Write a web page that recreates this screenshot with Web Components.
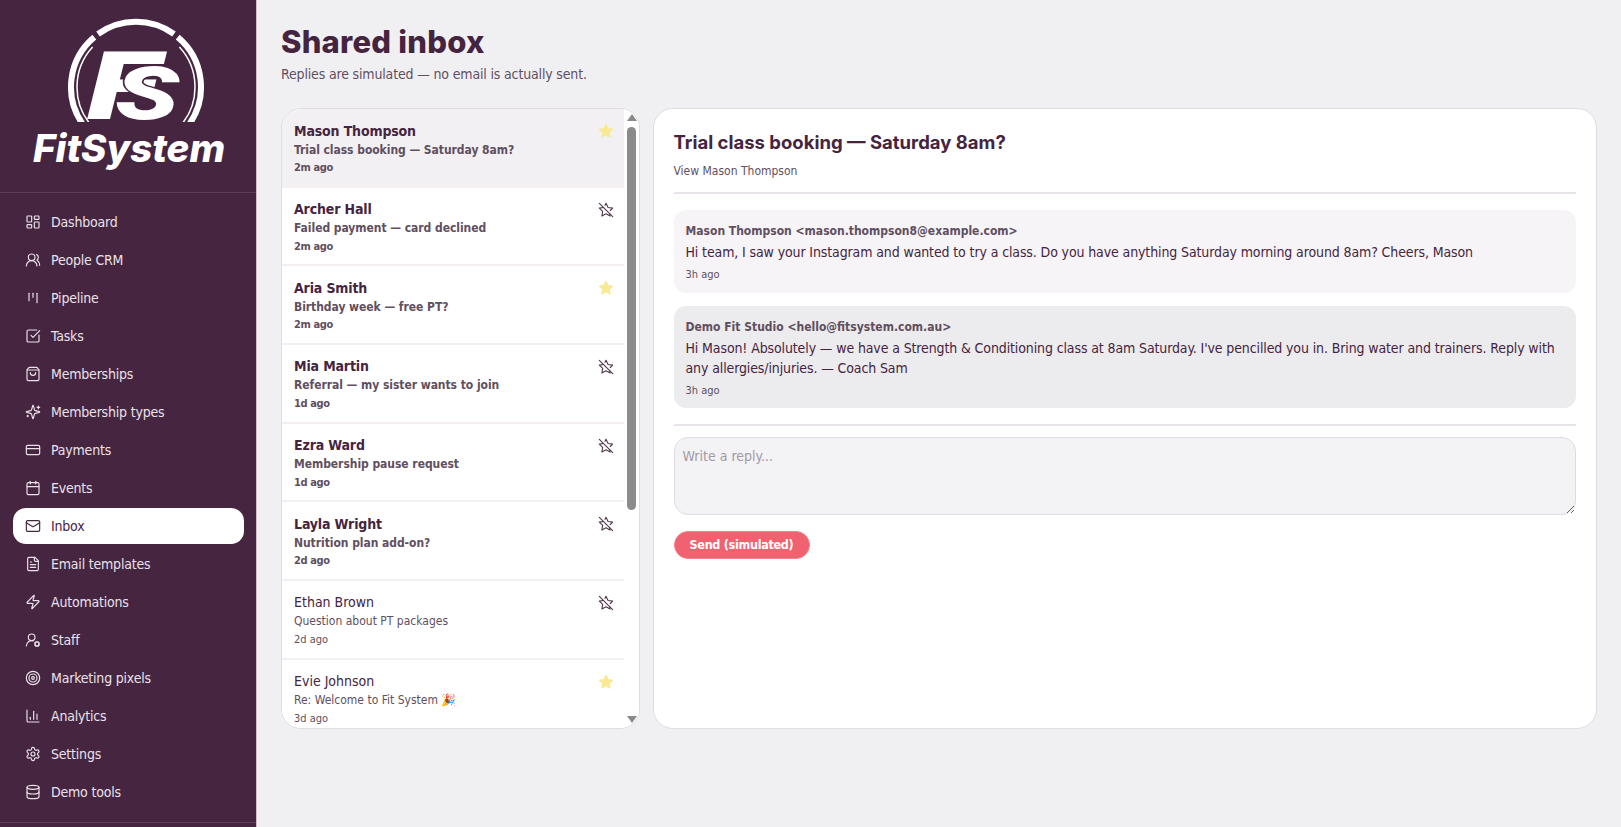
<!DOCTYPE html>
<html><head><meta charset="utf-8">
<style>
html,body{margin:0;height:100%;overflow:hidden;background:#f0f0f3}
</style></head><body>
<fit-app></fit-app>
<script>
const P={
dashboard:'<rect x="3" y="3" width="7" height="9" rx="1"/><rect x="14" y="3" width="7" height="5" rx="1"/><rect x="14" y="12" width="7" height="9" rx="1"/><rect x="3" y="16" width="7" height="5" rx="1"/>',
people:'<path d="M18 21a8 8 0 0 0-16 0"/><circle cx="10" cy="8" r="5"/><path d="M22 20c0-3.37-2-6.5-4-8a5 5 0 0 0-.45-8.3"/>',
pipeline:'<path d="M6 5v11"/><path d="M12 5v6"/><path d="M18 5v14"/>',
tasks:'<path d="M21 10.5V19a2 2 0 0 1-2 2H5a2 2 0 0 1-2-2V5a2 2 0 0 1 2-2h12.5"/><path d="m9 11 3 3L22 4"/>',
bag:'<path d="M16 10a4 4 0 0 1-8 0"/><path d="M3.103 6.034h17.794"/><path d="M3.4 5.467a2 2 0 0 0-.4 1.2V20a2 2 0 0 0 2 2h14a2 2 0 0 0 2-2V6.667a2 2 0 0 0-.4-1.2l-2-2.667A2 2 0 0 0 17 2H7a2 2 0 0 0-1.6.8z"/>',
sparkles:'<path d="M9.937 15.5A2 2 0 0 0 8.5 14.063l-6.135-1.582a.5.5 0 0 1 0-.962L8.5 9.936A2 2 0 0 0 9.937 8.5l1.582-6.135a.5.5 0 0 1 .963 0L14.063 8.5A2 2 0 0 0 15.5 9.937l6.135 1.581a.5.5 0 0 1 0 .964L15.5 14.063a2 2 0 0 0-1.437 1.437l-1.582 6.135a.5.5 0 0 1-.963 0z"/><path d="M20 3v4"/><path d="M22 5h-4"/><path d="M4 17v2"/><path d="M5 18H3"/>',
card:'<rect x="2" y="5" width="20" height="14" rx="2"/><line x1="2" y1="10" x2="22" y2="10"/>',
calendar:'<path d="M8 2v4"/><path d="M16 2v4"/><rect x="3" y="4" width="18" height="18" rx="2"/><path d="M3 10h18"/>',
mail:'<rect x="2" y="4" width="20" height="16" rx="2"/><path d="m22 7-8.97 5.7a1.94 1.94 0 0 1-2.06 0L2 7"/>',
file:'<path d="M15 2H6a2 2 0 0 0-2 2v16a2 2 0 0 0 2 2h12a2 2 0 0 0 2-2V7Z"/><path d="M14 2v4a2 2 0 0 0 2 2h4"/><path d="M10 9H8"/><path d="M16 13H8"/><path d="M16 17H8"/>',
zap:'<path d="M4 14a1 1 0 0 1-.78-1.63l9.9-10.2a.5.5 0 0 1 .86.46l-1.92 6.02A1 1 0 0 0 13 10h7a1 1 0 0 1 .78 1.63l-9.9 10.2a.5.5 0 0 1-.86-.46l1.92-6.02A1 1 0 0 0 11 14z"/>',
staff:'<path d="M2 21a8 8 0 0 1 10.434-7.62"/><circle cx="10" cy="8" r="5"/><circle cx="18" cy="18" r="3"/><path d="m14.305 19.53.923-.382"/><path d="m15.228 16.852-.923-.383"/><path d="m16.852 15.228-.383-.923"/><path d="m16.852 20.772-.383.924"/><path d="m19.148 15.228.383-.923"/><path d="m19.53 21.696-.382-.924"/><path d="m20.772 16.852.924-.383"/><path d="m20.772 19.148.924.383"/>',
target:'<circle cx="12" cy="12" r="10"/><circle cx="12" cy="12" r="6"/><circle cx="12" cy="12" r="2"/>',
chart:'<path d="M3 3v16a2 2 0 0 0 2 2h16"/><path d="M18 17V9"/><path d="M13 17V5"/><path d="M8 17v-3"/>',
gear:'<path d="M12.22 2h-.44a2 2 0 0 0-2 2v.18a2 2 0 0 1-1 1.73l-.43.25a2 2 0 0 1-2 0l-.15-.08a2 2 0 0 0-2.73.73l-.22.38a2 2 0 0 0 .73 2.73l.15.1a2 2 0 0 1 1 1.72v.51a2 2 0 0 1-1 1.74l-.15.09a2 2 0 0 0-.73 2.73l.22.38a2 2 0 0 0 2.73.73l.15-.08a2 2 0 0 1 2 0l.43.25a2 2 0 0 1 1 1.73V20a2 2 0 0 0 2 2h.44a2 2 0 0 0 2-2v-.18a2 2 0 0 1 1-1.73l.43-.25a2 2 0 0 1 2 0l.15.08a2 2 0 0 0 2.73-.73l.22-.39a2 2 0 0 0-.73-2.73l-.15-.08a2 2 0 0 1-1-1.74v-.5a2 2 0 0 1 1-1.74l.15-.09a2 2 0 0 0 .73-2.73l-.22-.38a2 2 0 0 0-2.73-.73l-.15.08a2 2 0 0 1-2 0l-.43-.25a2 2 0 0 1-1-1.73V4a2 2 0 0 0-2-2z"/><circle cx="12" cy="12" r="3"/>',
db:'<ellipse cx="12" cy="5" rx="9" ry="3"/><path d="M3 5V19A9 3 0 0 0 21 19V5"/><path d="M3 12A9 3 0 0 0 21 12"/>',
staroff:'<path d="M8.34 8.34 2 9.27l5 4.87L5.82 21 12 17.77 18.18 21l-.59-3.43"/><path d="M18.42 12.76 22 9.27l-6.91-1L12 2l-1.44 2.91"/><line x1="2" y1="2" x2="22" y2="22"/>',
star:'<polygon points="12 2 15.09 8.26 22 9.27 17 14.14 18.18 21.02 12 17.77 5.82 21.02 7 14.14 2 9.27 8.91 8.26 12 2"/>'
};
const BODY='"DejaVu Sans Condensed","DejaVu Sans",sans-serif';
function def(name,css,html){
  customElements.define(name,class extends HTMLElement{
    connectedCallback(){
      if(this.shadowRoot)return;
      const r=this.attachShadow({mode:'open'});
      r.innerHTML='<style>'+css+'</style>'+(typeof html==='function'?html(this):html);
    }
  });
}
def('ui-icon',':host{display:inline-flex;flex:none}svg{display:block;fill:var(--fill,none);stroke:currentColor;stroke-width:var(--sw,1.75);stroke-linecap:round;stroke-linejoin:round}',
  h=>{const s=h.getAttribute('size')||16;return `<svg width="${s}" height="${s}" viewBox="0 0 24 24">${P[h.getAttribute('name')]}</svg>`});
def('nav-item',`:host{display:flex;align-items:center;gap:10px;height:36px;padding:0 12px;border-radius:13px;font:14px/18px ${BODY};color:#e9e2e9;letter-spacing:-.2px}
:host([active]){background:#fff;color:#45243f}`,
  h=>`<ui-icon name="${h.getAttribute('icon')}"></ui-icon><span><slot></slot></span>`);
def('brand-logo',':host{display:block;height:192px;border-bottom:1px solid #5c3d57}svg{display:block}',
`<svg width="256" height="192" viewBox="0 0 256 192">
<defs><clipPath id="c"><rect x="0" y="0" width="256" height="122"/></clipPath></defs>
<g fill="none" stroke="#fff" clip-path="url(#c)">
<path d="M83.3 125A65 65 0 0 1 94.3 37.1" stroke-width="6"/>
<path d="M98 34A65 65 0 0 1 174 34" stroke-width="6"/>
<path d="M177.7 37.1A65 65 0 0 1 188.7 125" stroke-width="6"/>
<path d="M90.9 125A59 59 0 0 1 92.6 47" stroke-width="1.5"/>
<path d="M179.4 47A59 59 0 0 1 181.1 125" stroke-width="1.5"/>
</g>
<text transform="translate(87 119) scale(1.45 1)" font-family="Roboto" font-weight="900" font-style="italic" font-size="94" fill="#fff">F</text>
<text transform="translate(115 119) scale(1.42 1)" font-family="Roboto" font-weight="900" font-style="italic" font-size="74" fill="#fff" stroke="#462541" stroke-width="2.5" paint-order="stroke">S</text>
<text x="129" y="162" text-anchor="middle" textLength="192" lengthAdjust="spacingAndGlyphs" font-family="Inter" font-weight="800" font-style="italic" font-size="38" fill="#fff">FitSystem</text>
</svg>`);
def('side-bar',':host{display:block;width:257px;background:#462541;height:827px;flex:none;box-sizing:border-box;border-right:1px solid #cdbfcb}nav{display:flex;flex-direction:column;gap:2px;padding:11px 12px 12px 13px;border-bottom:1px solid #5c3d57}',
`<brand-logo></brand-logo><nav><slot></slot></nav>`);
def('page-head',`:host{display:block;height:108px;box-sizing:border-box;padding-top:22px}
h1{margin:0;font:800 31px/40px Inter,sans-serif;color:#45243f;letter-spacing:.23px}
p{margin:2px 0 0;font:14px/20px ${BODY};color:#5f4f5f;letter-spacing:-.16px}`,
h=>`<h1>${h.getAttribute('title')}</h1><p><slot></slot></p>`);
def('thread-row',`:host{display:block;height:78.67px;box-sizing:border-box;padding:12.5px 12px 0 12px;border-bottom:2px solid #f3eff3;background:#fff;position:relative;font-family:${BODY};color:#5f4f5f}
:host([selected]){background:#f2f0f3}
.n{font-size:14px;line-height:19px;color:#45243f}
.s{font-size:12px;line-height:18px}
.t{font-size:11px;line-height:18px;margin-top:.5px}
:host([unread]) .n{font-weight:700;letter-spacing:-.15px}
:host([unread]) .s{font-weight:700;letter-spacing:-.05px}
:host([unread]) .t{font-weight:700;letter-spacing:-.4px}
.flag{position:absolute;right:10px;top:14px;color:#4f3a4c;--sw:1.7}
.on{color:#f8ea95;--fill:#f8ea95}`,
h=>`<div class="n">${h.getAttribute('name')}</div><div class="s"><slot></slot></div><div class="t">${h.getAttribute('time')}</div>
<ui-icon class="flag ${h.hasAttribute('starred')?'on':''}" size="16" name="${h.hasAttribute('starred')?'star':'staroff'}"></ui-icon>`);
def('thread-list',`:host{display:flex;height:621px;box-sizing:border-box;border:1px solid #e3dbe3;border-radius:20px;background:#fff;overflow:hidden}
.rows{flex:1;min-width:0;overflow:hidden}
.bar{width:15px;flex:none;display:flex;flex-direction:column;align-items:center;background:#fff}
.up,.dn{width:0;height:0;border-left:5px solid transparent;border-right:5px solid transparent;flex:none}
.up{border-bottom:7px solid #8a8a8a;margin-top:5px}
.dn{border-top:7px solid #8a8a8a;margin-top:auto;margin-bottom:5px}
.th{width:9px;height:383px;background:#8b8b8b;border-radius:5px;margin-top:6px}`,
`<div class="rows"><slot></slot></div><div class="bar"><div class="up"></div><div class="th"></div><div class="dn"></div></div>`);
def('msg-bubble',`:host{display:block;padding:12px 12px 8.6px;border-radius:12px;background:#f6f4f7;font-family:${BODY};color:#45243f}
:host([staff]){background:#ecebee}
.f{font-size:12px;font-weight:700;line-height:18px;color:#5f4f5f}
.b{font-size:14px;line-height:20px;margin-top:2px;letter-spacing:-.12px}
.t{font-size:11px;line-height:18px;margin-top:4px;color:#5f4f5f}`,
h=>`<div class="f">${h.getAttribute('from').replace(/</g,'&lt;').replace(/>/g,'&gt;')}</div><div class="b"><slot></slot></div><div class="t">${h.getAttribute('time')}</div>`);
def('reply-box',`:host{display:block;margin-top:16px;padding-top:11px;border-top:2px solid #e9e4e9}
.ta{display:block;width:100%;box-sizing:border-box;height:78px;border:1px solid #e3dbe3;border-radius:14px;background:#f3f2f4;padding:8px 8px;font:14px/20px ${BODY};color:#45243f;resize:vertical;outline:none;margin:0}
.ta::placeholder{color:#a398a6}
button{display:block;margin-top:15.5px;width:136px;height:28px;border:1px solid #f4808a;border-radius:14px;background:#f0626f;color:#fff;font:700 12.5px/18px ${BODY};letter-spacing:-.3px;padding:0}`,
`<textarea class="ta" placeholder="Write a reply..."></textarea><button>Send (simulated)</button>`);
def('thread-detail',`:host{display:block;height:621px;box-sizing:border-box;border:1px solid #e3dbe3;border-radius:20px;background:#fff;padding:20px 20px 0 19.5px;font-family:${BODY}}
h2{margin:0;font:700 18.5px/26px Inter,sans-serif;color:#45243f}
.v{margin-top:7px;font-size:12px;line-height:18px;color:#5f4f5f}
.m{margin-top:12px;padding-top:16px;border-top:2px solid #e9e4e9;display:flex;flex-direction:column;gap:13px}`,
h=>`<h2>${h.getAttribute('subject')}</h2><div class="v">${h.getAttribute('link')}</div><div class="m"><slot></slot></div><reply-box></reply-box>`);
def('fit-app',`:host{display:flex;width:1621px;height:827px;overflow:hidden}
main{flex:1;min-width:0;padding:0 24px 0 24px}
.g{display:grid;grid-template-columns:359px 1fr;gap:13px}`,
`<side-bar>
<nav-item icon="dashboard">Dashboard</nav-item><nav-item icon="people">People CRM</nav-item><nav-item icon="pipeline">Pipeline</nav-item><nav-item icon="tasks">Tasks</nav-item><nav-item icon="bag">Memberships</nav-item><nav-item icon="sparkles">Membership types</nav-item><nav-item icon="card">Payments</nav-item><nav-item icon="calendar">Events</nav-item><nav-item icon="mail" active>Inbox</nav-item><nav-item icon="file">Email templates</nav-item><nav-item icon="zap">Automations</nav-item><nav-item icon="staff">Staff</nav-item><nav-item icon="target">Marketing pixels</nav-item><nav-item icon="chart">Analytics</nav-item><nav-item icon="gear">Settings</nav-item><nav-item icon="db">Demo tools</nav-item>
</side-bar>
<main><page-head title="Shared inbox">Replies are simulated — no email is actually sent.</page-head>
<div class="g"><thread-list>
<thread-row name="Mason Thompson" time="2m ago" unread selected starred>Trial class booking — Saturday 8am?</thread-row>
<thread-row name="Archer Hall" time="2m ago" unread>Failed payment — card declined</thread-row>
<thread-row name="Aria Smith" time="2m ago" unread starred>Birthday week — free PT?</thread-row>
<thread-row name="Mia Martin" time="1d ago" unread>Referral — my sister wants to join</thread-row>
<thread-row name="Ezra Ward" time="1d ago" unread>Membership pause request</thread-row>
<thread-row name="Layla Wright" time="2d ago" unread>Nutrition plan add-on?</thread-row>
<thread-row name="Ethan Brown" time="2d ago">Question about PT packages</thread-row>
<thread-row name="Evie Johnson" time="3d ago" starred>Re: Welcome to Fit System 🎉</thread-row>
</thread-list>
<thread-detail subject="Trial class booking — Saturday 8am?" link="View Mason Thompson">
<msg-bubble from="Mason Thompson <mason.thompson8@example.com>" time="3h ago">Hi team, I saw your Instagram and wanted to try a class. Do you have anything Saturday morning around 8am? Cheers, Mason</msg-bubble>
<msg-bubble staff from="Demo Fit Studio <hello@fitsystem.com.au>" time="3h ago">Hi Mason! Absolutely — we have a Strength &amp; Conditioning class at 8am Saturday. I've pencilled you in. Bring water and trainers. Reply with any allergies/injuries. — Coach Sam</msg-bubble>
</thread-detail></div></main>`);
</script></body></html>
